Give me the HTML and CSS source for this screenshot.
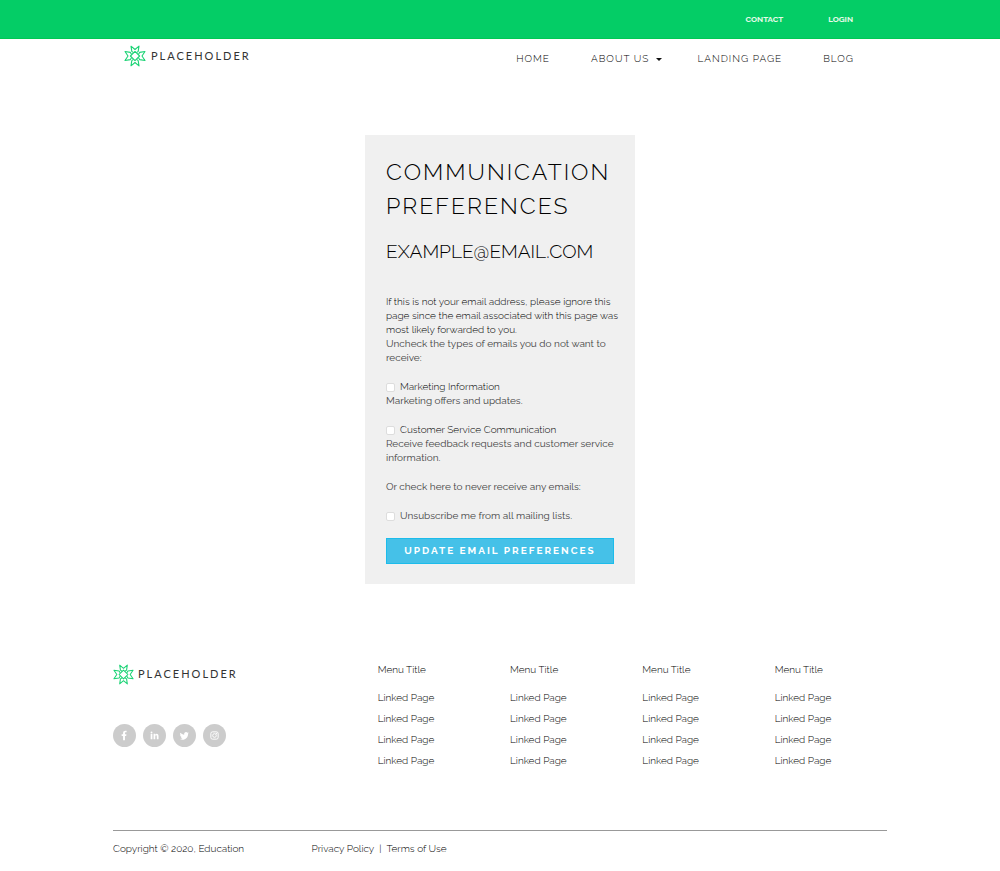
FILE: index.html
```html
<!DOCTYPE html>
<html lang="en">
<head>
<meta charset="utf-8">
<meta name="viewport" content="width=device-width, initial-scale=1">
<title>Communication Preferences</title>
<link rel="stylesheet" href="styles.css">
</head>
<body>
<svg class="defs" aria-hidden="true">
  <symbol id="star" viewBox="0 0 22 22">
    <g fill="none" stroke="#1bd375" stroke-width="1.100" stroke-linejoin="round">
      <path d="M9.500 7.600 7.800 6.400 7 1.200 11 4.500l4-3.300-.8 5.200-1.700 1.200M9.500 14.400l-1.700 1.200L7 20.800l4-3.300 4 3.300-.8-5.200-1.700-1.200M7.600 9.500 6.400 7.400 1 6.500 4 11l-3 4.500 5.400-.9 1.200-2.100M14.400 9.500l1.200-2.100 5.400-.9L18 11l3 4.500-5.400-.9-1.200-2.100"/>
      <path d="M11 6.400 15.600 11 11 15.600 6.400 11z"/>
    </g>
  </symbol>
</svg>
<div class="topbar">
  <nav class="container topbar-links" aria-label="Account">
    <a href="#">Contact</a>
    <a href="#">Login</a>
  </nav>
</div>
<header class="container header">
  <a class="logo" href="#"><svg class="logo-mark" aria-hidden="true"><use href="#star"/></svg>PLACEHOLDER</a>
  <nav class="main-nav" aria-label="Main">
    <a href="#">Home</a>
    <a class="has-menu" href="#">About us</a>
    <a href="#">Landing page</a>
    <a href="#">Blog</a>
  </nav>
</header>
<main class="main">
  <form class="card">
    <h1 class="title">Communication Preferences</h1>
    <h2 class="email">example@email.com</h2>
    <div class="groups">
      <div>
        <p class="intro">If this is not your email address, please ignore this<br>page since the email associated with this page was<br>most likely forwarded to you.</p>
        <p class="note">Uncheck the types of emails you do not want to receive:</p>
      </div>
      <div>
        <label class="option"><input type="checkbox">Marketing Information</label>
        <p class="note">Marketing offers and updates.</p>
      </div>
      <div>
        <label class="option"><input type="checkbox">Customer Service Communication</label>
        <p class="note">Receive feedback requests and customer service information.</p>
      </div>
      <p class="note">Or check here to never receive any emails:</p>
      <label class="option note"><input type="checkbox">Unsubscribe me from all mailing lists.</label>
    </div>
    <button class="submit" type="button">Update email preferences</button>
  </form>
</main>
<footer class="container footer">
  <div class="footer-grid">
    <div class="brand">
      <a class="logo" href="#"><svg class="logo-mark" aria-hidden="true"><use href="#star"/></svg>PLACEHOLDER</a>
      <div class="social">
        <a href="#" aria-label="Facebook"><svg viewBox="0 0 24 24"><path d="M10.500 17v-4.400H9v-1.800h1.500V9.400c0-1.600.9-2.400 2.400-2.400h1.300v1.700h-.8c-.7 0-.9.300-.9.900v1.200H14l-.2 1.800h-1.300V17z"/></svg></a>
        <a href="#" aria-label="LinkedIn"><svg viewBox="0 0 24 24"><path d="M8 10.300h1.800V16H8zM8.900 7.700a1 1 0 1 1 0 2 1 1 0 0 1 0-2zM11 10.300h1.700v.8c.9-1.400 3.500-1.200 3.500 1.400V16h-1.800v-3c0-1.800-1.600-1.600-1.600 0v3H11z"/></svg></a>
        <a href="#" aria-label="Twitter"><svg viewBox="0 0 24 24"><path d="M16.800 8.900l-1 1c.1 5.300-4.800 8-8.600 5.700 1 0 2-.2 2.700-.8-.9-.1-1.500-.6-1.800-1.300h.8c-1-.3-1.500-1-1.500-1.900l.8.2c-.9-.7-1.100-1.700-.5-2.600 1.100 1.200 2.300 1.900 4 2-.5-2.500 2-3.500 3.400-2.100l1.200-.5-.8 1.100z"/></svg></a>
        <a href="#" aria-label="Instagram"><svg viewBox="0 0 24 24"><g fill="none" stroke="#fff"><rect x="8.200" y="8.200" width="7.600" height="7.600" rx="1.800"/><circle cx="12" cy="12" r="1.900"/></g><circle cx="14.200" cy="9.800" r=".6"/></svg></a>
      </div>
    </div>
    <nav class="menu" aria-label="Menu 1"><h3>Menu Title</h3><a href="#">Linked Page</a><a href="#">Linked Page</a><a href="#">Linked Page</a><a href="#">Linked Page</a></nav>
    <nav class="menu" aria-label="Menu 2"><h3>Menu Title</h3><a href="#">Linked Page</a><a href="#">Linked Page</a><a href="#">Linked Page</a><a href="#">Linked Page</a></nav>
    <nav class="menu" aria-label="Menu 3"><h3>Menu Title</h3><a href="#">Linked Page</a><a href="#">Linked Page</a><a href="#">Linked Page</a><a href="#">Linked Page</a></nav>
    <nav class="menu" aria-label="Menu 4"><h3>Menu Title</h3><a href="#">Linked Page</a><a href="#">Linked Page</a><a href="#">Linked Page</a><a href="#">Linked Page</a></nav>
  </div>
  <div class="legal">
    <p>Copyright © 2020, Education</p>
    <div class="legal-links"><a href="#">Privacy Policy</a><span>|</span><a href="#">Terms of Use</a></div>
  </div>
</footer>
</body>
</html>
```
FILE: styles.css
```css
* { box-sizing: border-box; }
body {
  margin: 0;
  background: #fff;
  color: #000;
  font: 300 10px/14px Raleway, Lato, sans-serif;
}
h1, h2, h3, p { margin: 0; font-weight: 300; }
a { color: inherit; text-decoration: none; }
.defs { position: absolute; width: 0; height: 0; }
.container {
  width: calc(100% - 32px);
  max-width: 774px;
  margin: 0 auto;
}
.topbar {
  background: #04cd66;
  border-bottom: 1px solid #00c853;
}
.topbar-links {
  display: flex;
  justify-content: flex-end;
  gap: 45px;
  padding: 12px 34px 12px 0;
  color: #e6fbe9;
  font-size: 8px;
  font-weight: 700;
  text-transform: uppercase;
}
.header {
  display: flex;
  align-items: center;
  justify-content: space-between;
  padding: 6px 33px 0 11px;
}
.logo {
  display: flex;
  align-items: center;
  gap: 5px;
  color: #333;
  font: 11px/22px Lato, sans-serif;
  letter-spacing: 2px;
}
.logo-mark { width: 22px; height: 22px; }
.main-nav {
  display: flex;
  gap: 41px;
  padding-top: 6px;
  letter-spacing: 1px;
  text-transform: uppercase;
}
.has-menu {
  display: flex;
  align-items: center;
  gap: 7px;
  margin-right: -6px;
}
.has-menu::after {
  content: "";
  border: 3px solid transparent;
  border-top-color: #111;
  border-bottom: 0;
}
.main { padding: 68px 16px 79px; }
.card {
  width: 100%;
  max-width: 270px;
  margin: 0 auto;
  padding: 20px 21px;
  background: #f0f0f0;
}
.title {
  color: #000;
  font-size: 23px;
  line-height: 34px;
  letter-spacing: 2px;
  text-transform: uppercase;
}
.email {
  margin-top: 15px;
  color: #000;
  font-size: 19px;
  line-height: 26px;
  text-transform: uppercase;
}
.groups {
  display: flex;
  flex-direction: column;
  gap: 15px;
  margin-top: 31px;
}
.intro { white-space: nowrap; }
.note {
  color: #444;
  font-weight: 400;
}
.option {
  display: flex;
  align-items: center;
  gap: 5px;
}
.option input {
  appearance: none;
  width: 9px;
  height: 9px;
  margin: 1px 0 0;
  border: 1px solid #ddd;
  border-radius: 2px;
  background: #fff;
}
.option input:checked { background: #45c1e8; }
.submit {
  width: 100%;
  margin-top: 15px;
  padding: 5px;
  border: 1px solid #1cbceb;
  background: #45c1e8;
  color: #fff;
  font: 700 10px/14px Raleway, Lato, sans-serif;
  letter-spacing: 2px;
  text-transform: uppercase;
}
.footer-grid, .legal {
  display: grid;
  grid-template-columns: repeat(12, 1fr);
  column-gap: 20px;
}
.brand { grid-column: span 4; }
.brand .logo { gap: 4px; }
.brand .logo-mark { width: 21px; height: 21px; }
.social {
  display: flex;
  gap: 7px;
  margin-top: 39px;
}
.social a {
  width: 23px;
  height: 23px;
  border-radius: 50%;
  background: #ccc;
}
.social svg { display: block; fill: #fff; }
.menu {
  display: flex;
  flex-direction: column;
  grid-column: span 2;
  gap: 7px;
}
.menu h3 {
  margin-bottom: 7px;
  font-size: 10px;
}
.legal {
  margin-top: 62px;
  padding: 11px 0 16px;
  border-top: 1px solid #999;
}
.legal p { grid-column: span 3; }
.legal-links {
  display: flex;
  grid-column: span 9;
  gap: 5px;
}
```
